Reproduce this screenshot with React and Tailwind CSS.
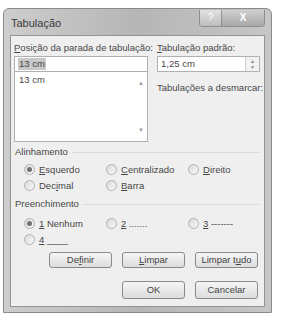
import React from 'react'

const font = { fontFamily: '"Liberation Sans", Arial, sans-serif' }

const U = ({ children }) => <span className="underline underline-offset-1">{children}</span>

function Radio({ checked, children, className = '' }) {
  return (
    <div className={`flex h-[11px] items-center gap-[4px] ${className}`}>
      <span className="flex h-[11px] w-[11px] shrink-0 items-center justify-center rounded-full border border-[#b0b0b0] bg-gradient-to-br from-[#d9d9d9] to-[#fafafa]">
        {checked && <span className="h-[5px] w-[5px] rounded-full bg-[#707070]" />}
      </span>
      <span className="whitespace-nowrap">{children}</span>
    </div>
  )
}

function Btn({ children, h = 'h-[16px]' }) {
  return (
    <div className={`flex ${h} w-[63px] items-center justify-center rounded-[3px] border border-[#8a8a8a] bg-gradient-to-b from-[#f6f6f6] to-[#dcdcdc] text-[#444]`}>
      {children}
    </div>
  )
}

function Group({ title }) {
  return (
    <div className="flex h-[12px] items-center gap-[4px] pl-[4px] pr-[5px]">
      <span>{title}</span>
      <div className="h-px flex-1 bg-[#d8d8d8]" />
    </div>
  )
}

export default function App() {
  return (
    <div className="h-[331px] w-[297px] bg-white pl-[3px] pt-[8px] text-[9.5px] leading-[12px] text-[#474747]" style={font}>
      <div className="flex h-[305px] w-[269px] flex-col rounded-t-[6px] border border-[#8a8a8a] bg-gradient-to-r from-[#cdcdcd] via-[#b6b6b6] to-[#c6c6c6] px-[6px] pb-[5px]">
        <div className="flex h-[26px] items-start justify-between">
          <span className="mt-[8px] pl-[1px] text-[11px] text-[#3a3a3a]">Tabulação</span>
          <div className="mt-[1px] flex h-[17px] overflow-hidden rounded-b-[4px] border border-t-0 border-[#8f8f8f]">
            <div className="flex w-[22px] items-center justify-center border-r border-[#8f8f8f] bg-gradient-to-b from-[#e2e2e2] to-[#bdbdbd] text-[10px] text-white">?</div>
            <div className="flex w-[42px] items-center justify-center bg-gradient-to-b from-[#d0d0d0] to-[#a8a8a8] text-[10px] font-bold text-white">X</div>
          </div>
        </div>
        <div className="flex flex-1 flex-col border border-[#939393] bg-[#efefef]">
          <div className="flex gap-[9px] pl-[3px] pt-[6px]">
            <div className="flex w-[134px] flex-col">
              <span className="h-[14px] whitespace-nowrap"><U>P</U>osição da parada de tabulação:</span>
              <div className="flex h-[16px] items-center border border-[#b0b0b0] bg-white pl-[3px]">
                <span className="bg-[#c8c8c8] px-[1px]">13 cm</span>
              </div>
              <div className="flex h-[70px] border border-t-0 border-[#b0b0b0] bg-white">
                <div className="flex-1 pl-[4px] pt-[2px]">13 cm</div>
                <div className="flex w-[12px] flex-col items-center justify-between py-[5px] text-[6px] text-[#999]">
                  <span>▲</span>
                  <span>▼</span>
                </div>
              </div>
            </div>
            <div className="flex w-[103px] flex-col">
              <span className="h-[14px] whitespace-nowrap"><U>T</U>abulação padrão:</span>
              <div className="flex h-[16px] border border-[#b0b0b0] bg-white">
                <div className="flex flex-1 items-center pl-[3px]">1,25 cm</div>
                <div className="flex w-[14px] flex-col items-center justify-center border-l border-[#d0d0d0] bg-[#f2f2f2] text-[5px] leading-[6px] text-[#888]">
                  <span>▲</span>
                  <span>▼</span>
                </div>
              </div>
              <span className="mt-[10px] whitespace-nowrap">Tabulações a desmarcar:</span>
            </div>
          </div>
          <div className="mt-[4px]">
            <Group title="Alinhamento" />
          </div>
          <div className="mt-[6px] flex flex-col gap-[5px] pl-[13px]">
            <div className="flex">
              <Radio checked className="w-[82px]"><U>E</U>squerdo</Radio>
              <Radio className="w-[82px]"><U>C</U>entralizado</Radio>
              <Radio><U>D</U>ireito</Radio>
            </div>
            <div className="flex">
              <Radio className="w-[82px]">Dec<U>i</U>mal</Radio>
              <Radio><U>B</U>arra</Radio>
            </div>
          </div>
          <div className="mt-[7px]">
            <Group title="Preenchimento" />
          </div>
          <div className="mt-[8px] flex flex-col gap-[5px] pl-[13px]">
            <div className="flex">
              <Radio checked className="w-[82px]"><U>1</U> Nenhum</Radio>
              <Radio className="w-[82px]"><U>2</U> .......</Radio>
              <Radio><U>3</U> -------</Radio>
            </div>
            <div className="flex">
              <Radio><U>4</U> ____</Radio>
            </div>
          </div>
          <div className="mt-[7px] flex justify-end gap-[10px] pr-[6px]">
            <Btn>De<U>f</U>inir</Btn>
            <Btn><U>L</U>impar</Btn>
            <Btn>Limpar t<U>u</U>do</Btn>
          </div>
          <div className="mt-[13px] flex justify-end gap-[10px] pr-[6px]">
            <Btn h="h-[18px]">OK</Btn>
            <Btn h="h-[18px]">Cancelar</Btn>
          </div>
        </div>
      </div>
    </div>
  )
}
